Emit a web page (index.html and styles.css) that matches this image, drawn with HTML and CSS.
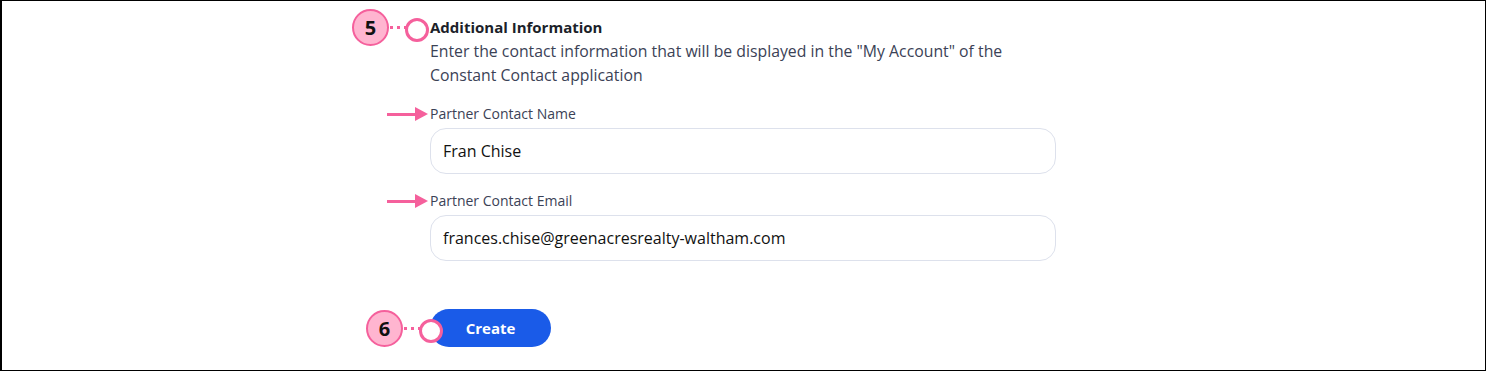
FILE: index.html
```html
<!DOCTYPE html>
<html lang="en">
<head>
    <meta charset="UTF-8">
    <title>Additional Information</title>
    <link rel="stylesheet" href="styles.css">
</head>
<body>
    <div class="frame">
        <div class="form-column">
            <div class="section-head">
                <span class="step step-5">5</span>
                <h3>Additional Information</h3>
                <p class="hint">Enter the contact information that will be displayed in the "My Account" of the<br>Constant Contact application</p>
            </div>

            <div class="form-group">
                <span class="arrow"></span>
                <label for="contactName">Partner Contact Name</label>
                <input type="text" id="contactName" value="Fran Chise">
            </div>

            <div class="form-group">
                <span class="arrow"></span>
                <label for="contactEmail">Partner Contact Email</label>
                <input type="email" id="contactEmail" value="frances.chise@greenacresrealty-waltham.com">
            </div>

            <div class="actions">
                <span class="step step-6">6</span>
                <button type="button" class="create-btn">Create</button>
            </div>
        </div>
    </div>
</body>
</html>
```

FILE: styles.css
```css
:root {
    --pink: #f5609c;
    --pink-light: #ffb5d0;
    --text-color: #1c1f2a;
    --muted-color: #3b4256;
    --border-color: #dde1ec;
    --blue: #1a5be8;
}

* {
    margin: 0;
    padding: 0;
    box-sizing: border-box;
    font-family: "Open Sans", "Noto Sans", sans-serif;
}

body {
    background: #fff;
}

.frame {
    width: 1486px;
    height: 371px;
    border: 1px solid #000;
    border-left-width: 2px;
    padding: 14px 0 0 428px;
}

.form-column {
    width: 626px;
}

.section-head {
    position: relative;
}

.section-head h3 {
    font-size: 15px;
    font-weight: 700;
    line-height: 24px;
    color: var(--text-color);
}

.hint {
    font-size: 15.8px;
    line-height: 24px;
    color: var(--muted-color);
}

/* numbered callouts */
.step {
    position: absolute;
    width: 37px;
    height: 37px;
    border-radius: 50%;
    background: var(--pink-light);
    border: 2px solid var(--pink);
    color: #111;
    font-size: 20px;
    font-weight: 700;
    display: flex;
    align-items: center;
    justify-content: center;
}

.step::before {
    content: "";
    position: absolute;
    left: 36px;
    top: 15px;
    width: 17px;
    border-top: 3px dotted var(--pink);
}

.step::after {
    content: "";
    position: absolute;
    left: 51px;
    top: 7px;
    width: 18px;
    height: 18px;
    border-radius: 50%;
    border: 3px solid var(--pink);
    background: #fff;
}

.step-5 {
    left: -78px;
    top: -6px;
}

.step-6 {
    left: -64px;
    top: 1px;
    z-index: 2;
}

.form-group {
    position: relative;
    margin-top: 18px;
}

.form-group label {
    display: block;
    font-size: 14px;
    line-height: 18px;
    color: var(--muted-color);
    margin-bottom: 5px;
}

.form-group input {
    width: 100%;
    height: 46px;
    border: 1px solid var(--border-color);
    border-radius: 16px;
    padding: 0 12px;
    font-size: 16px;
    color: #111;
    outline: none;
}

.arrow {
    position: absolute;
    left: -43px;
    top: 8px;
    width: 30px;
    height: 3px;
    background: var(--pink);
}

.arrow::after {
    content: "";
    position: absolute;
    left: 28px;
    top: -6px;
    border-left: 13px solid var(--pink);
    border-top: 7px solid transparent;
    border-bottom: 7px solid transparent;
}

.actions {
    position: relative;
    margin-top: 48px;
}

.create-btn {
    position: relative;
    width: 121px;
    height: 38px;
    border: none;
    border-radius: 19px;
    background: var(--blue);
    color: #fff;
    font-size: 15px;
    font-weight: 700;
    cursor: pointer;
}
```
